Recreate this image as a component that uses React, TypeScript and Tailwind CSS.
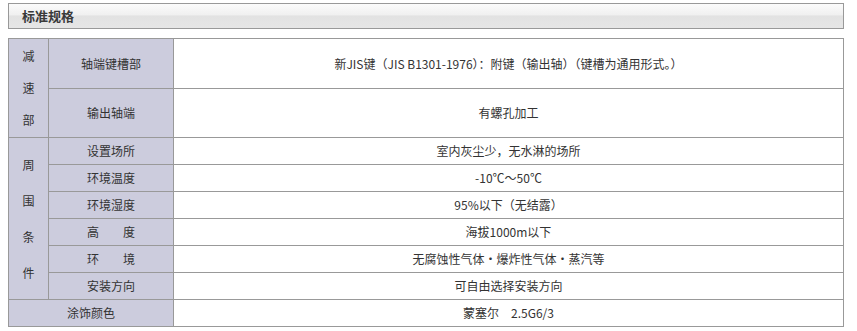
import type { ReactNode } from 'react'

const font = { fontFamily: '"SimSun", "Noto Sans CJK SC", sans-serif' }

const label = 'border border-[#999] bg-[#ccccdd] text-center align-middle'
const value = 'border border-[#999] bg-white text-center align-middle'

function Row({ name, text, h = 'h-[27px]', lead }: { name: string; text: ReactNode; h?: string; lead?: ReactNode }) {
  return (
    <tr className={h}>
      {lead}
      <td className={label}>{name}</td>
      <td className={value}>{text}</td>
    </tr>
  )
}

function Vertical({ chars, lh }: { chars: string[]; lh: string }) {
  return (
    <div className="flex flex-col items-center">
      {chars.map((c) => (
        <span key={c} className={`block ${lh}`}>
          {c}
        </span>
      ))}
    </div>
  )
}

export default function App() {
  return (
    <div className="min-h-[331px] bg-white pl-2 pt-[3px] text-[12px] text-[#333]" style={font}>
      <div className="flex h-[26px] w-[836px] items-center border border-[#999] bg-[linear-gradient(#fbfbfb_0%,#f0f0f0_45%,#e2e2e2_50%,#e6e6e6_100%)] pl-[13px]">
        <h2 className="text-[13px] font-bold text-[#3a3a3a]">标准规格</h2>
      </div>

      <table className="mt-[9px] w-[836px] table-fixed border-collapse border border-[#999]">
        <colgroup>
          <col className="w-[40px]" />
          <col className="w-[125px]" />
          <col />
        </colgroup>
        <tbody>
          <Row
            h="h-[50px]"
            lead={
              <td rowSpan={2} className={`${label} p-0`}>
                <Vertical chars={['减', '速', '部']} lh="leading-[32px]" />
              </td>
            }
            name="轴端键槽部"
            text="新JIS键（JIS B1301-1976）：附键（输出轴）（键槽为通用形式。）"
          />
          <Row h="h-[49px]" name="输出轴端" text="有螺孔加工" />
          <Row
            lead={
              <td rowSpan={6} className={`${label} p-0`}>
                <Vertical chars={['周', '围', '条', '件']} lh="leading-[36px]" />
              </td>
            }
            name="设置场所"
            text="室内灰尘少，无水淋的场所"
          />
          <Row name="环境温度" text="-10℃～50℃" />
          <Row name="环境湿度" text="95%以下（无结露）" />
          <Row name="高　　度" text="海拔1000m以下" />
          <Row name="环　　境" text="无腐蚀性气体・爆炸性气体・蒸汽等" />
          <Row name="安装方向" text="可自由选择安装方向" />
          <tr className="h-[27px]">
            <td colSpan={2} className={label}>
              涂饰颜色
            </td>
            <td className={value}>蒙塞尔　2.5G6/3</td>
          </tr>
        </tbody>
      </table>
    </div>
  )
}
